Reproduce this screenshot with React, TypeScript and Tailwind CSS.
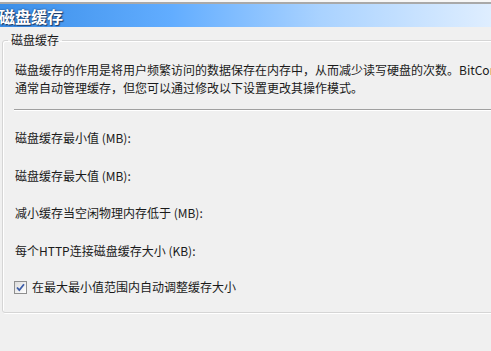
export default function App() {
  const fields = [
    '磁盘缓存最小值 (MB):',
    '磁盘缓存最大值 (MB):',
    '减小缓存当空闲物理内存低于 (MB):',
    '每个HTTP连接磁盘缓存大小 (KB):',
  ]

  return (
    <div
      className="w-[491px] h-[351px] overflow-hidden bg-[#f0f0f0] text-[12px] text-[#1a1a1a]"
      style={{ fontFamily: '"Noto Sans CJK SC", "Noto Sans", sans-serif' }}
    >
      <div className="h-[2px] bg-[#f7f7f7]" />
      <div className="h-[2px] bg-[#a9a9a9]" />
      <div className="h-[23px] bg-[linear-gradient(90deg,#3a8ee8_0%,#62adff_35%,#a9d2ff_65%,#dfeeff_100%)] flex items-center">
        <h1 className="-ml-[1px] text-[16px] font-bold leading-none text-white [text-shadow:1px_1px_1px_#1b3a66,0_0_2px_#1b3a66]">
          磁盘缓存
        </h1>
      </div>

      <fieldset className="mt-[5px] ml-[2px] w-[620px] h-[281px] border border-[#d5d5d5] rounded-[3px] shadow-[inset_1px_1px_0_#ffffff,1px_1px_0_#ffffff]">
        <legend className="ml-[5px] px-[3px] leading-[16px]">磁盘缓存</legend>

        <div className="pl-[12px] pt-[13px] leading-[18px] whitespace-nowrap">
          <p>磁盘缓存的作用是将用户频繁访问的数据保存在内存中，从而减少读写硬盘的次数。BitComet</p>
          <p>通常自动管理缓存，但您可以通过修改以下设置更改其操作模式。</p>
        </div>

        <div className="ml-[11px] mt-[12px] h-[2px] border-t border-[#a0a0a0] border-b-white border-b" />

        <div className="pl-[12px] pt-[18px] flex flex-col gap-[19.5px] whitespace-nowrap">
          {fields.map((f) => (
            <div key={f} className="leading-[18px]">
              {f}
            </div>
          ))}
          <label className="flex items-center gap-[5px] leading-[18px] -ml-[1px] -mt-[1px]">
            <span className="w-[13px] h-[13px] border border-[#8f8f8f] bg-[linear-gradient(135deg,#dcdcdc,#ffffff)] flex items-center justify-center">
              <svg width="11" height="11" viewBox="0 0 11 11">
                <path
                  d="M2 5.5 L4.3 8.2 L9 2.2"
                  fill="none"
                  stroke="#3b5ca8"
                  strokeWidth="1.8"
                />
              </svg>
            </span>
            在最大最小值范围内自动调整缓存大小
          </label>
        </div>
      </fieldset>
    </div>
  )
}
